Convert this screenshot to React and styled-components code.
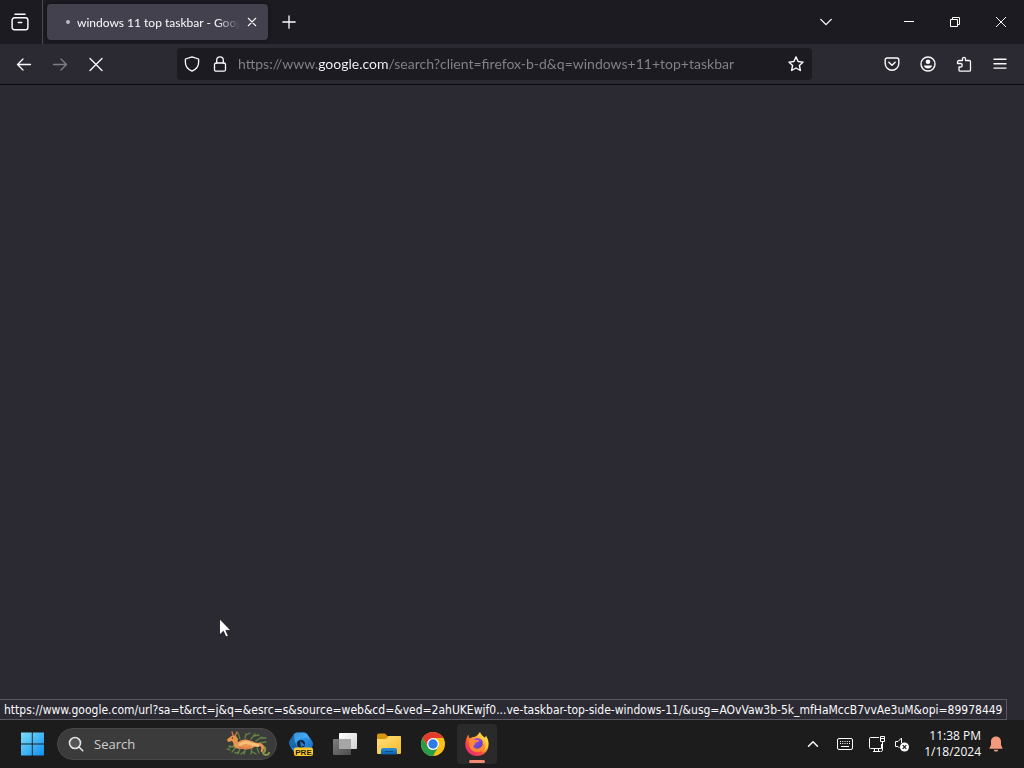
import React from 'react';
import styled, { createGlobalStyle } from 'styled-components';

const GlobalStyle = createGlobalStyle`
  * { box-sizing: border-box; }
  body {
    margin: 0;
    background: #2b2a33;
    font-family: "Open Sans", "Noto Sans", sans-serif;
    color: #fbfbfe;
  }
  button, input { font: inherit; color: inherit; border: 0; padding: 0; margin: 0; background: none; outline: none; }
  svg { display: block; flex: none; }
`;

const Desktop = styled.div`
  display: flex;
  flex-direction: column;
  min-height: 100vh;
`;

const Browser = styled.main`
  flex: 1;
  display: flex;
  flex-direction: column;
  font-family: Lato, "Open Sans", sans-serif;
`;

const TitleBar = styled.header`
  display: flex;
  align-items: center;
  height: 44px;
  background: #1c1b22;
`;

const IconButton = styled.button`
  display: flex;
  align-items: center;
  justify-content: center;
  flex: none;
  width: ${(p) => p.$width || 36}px;
  height: ${(p) => p.$height || 32}px;
  opacity: ${(p) => (p.disabled ? 0.4 : 1)};
`;

const ViewButtonArea = styled.div`
  display: flex;
  align-items: center;
  height: 44px;
  padding-right: 2px;
  border-right: 1px solid #4a4952;
`;

const Tab = styled.div`
  display: flex;
  align-items: center;
  width: 221px;
  height: 36px;
  margin-left: 4px;
  padding: 0 4px 0 19px;
  border-radius: 4px;
  background: #42414d;
  box-shadow: 0 0 4px rgba(0, 0, 0, 0.4);
`;

const Throbber = styled.span`
  width: 4px;
  height: 4px;
  margin-right: 7px;
  border-radius: 50%;
  background: #b9b8c2;
`;

const TabTitle = styled.span`
  flex: 1;
  min-width: 0;
  overflow: hidden;
  white-space: nowrap;
  padding-top: 2px;
  font-size: 12px;
  line-height: 18px;
  mask-image: linear-gradient(to left, transparent, #000 24px);
`;

const WindowControls = styled.div`
  display: flex;
  margin-left: auto;
  padding-left: 8px;
`;

const TabListButton = styled(IconButton)`
  margin-right: 37px;
`;

const Toolbar = styled.nav`
  display: flex;
  align-items: center;
  height: 41px;
  padding: 0 6px;
  background: #2b2a33;
  border-bottom: 1px solid #0c0c0d;
`;

const AddressBar = styled.div`
  flex: 1;
  display: flex;
  align-items: center;
  min-width: 0;
  height: 32px;
  margin: 0 62px 0 63px;
  padding-left: 1px;
  border-radius: 4px;
  background: #1c1b22;
`;

const AddressInput = styled.input`
  flex: 1;
  min-width: 0;
  height: 24px;
  margin-left: 4px;
  font-size: 14px;
  line-height: 24px;
  color: transparent;
  background: linear-gradient(90deg, #85848c 80px, #fbfbfe 80px, #fbfbfe 151px, #85848c 151px);
  background-clip: text;
`;

const Page = styled.section`
  position: relative;
  flex: 1;
  background: #2b2a33;
`;

const StatusPanel = styled.div`
  position: absolute;
  left: 0;
  bottom: 0;
  height: 21px;
  padding: 0 4px;
  border: 1px solid #5b5a63;
  border-left: 0;
  background: #2b2a33;
  font-family: "DejaVu Sans Condensed", "Open Sans", sans-serif;
  font-size: 12px;
  line-height: 21px;
  white-space: nowrap;
`;

const Pointer = styled.svg`
  position: absolute;
  left: 219px;
  top: 533px;
`;

const Taskbar = styled.footer`
  display: flex;
  align-items: center;
  height: 48px;
  padding: 0 20px 0 12px;
  background: #1c1c1c;
`;

const SearchBox = styled.label`
  display: flex;
  align-items: center;
  width: 220px;
  height: 32px;
  margin: 0 4px 0 5px;
  padding: 0 5px 0 10px;
  border: 1px solid #484848;
  border-radius: 16px;
  background: #3b3b3b;
`;

const SearchInput = styled.input`
  flex: 1;
  min-width: 0;
  margin-left: 10px;
  font-size: 13px;
  line-height: 20px;
  &::placeholder { color: #cfcfcf; opacity: 1; }
`;

const AppButton = styled.button`
  position: relative;
  display: flex;
  align-items: center;
  justify-content: center;
  flex: none;
  width: 40px;
  height: 40px;
  margin-right: 4px;
  border-radius: 4px;
  background: ${(p) => (p.$active ? '#2a2a2a' : 'transparent')};
  &::after {
    content: '';
    display: ${(p) => (p.$active ? 'block' : 'none')};
    position: absolute;
    bottom: 1px;
    left: 12px;
    width: 16px;
    height: 3px;
    border-radius: 2px;
    background: #f08a72;
  }
`;

const Tray = styled.div`
  display: flex;
  align-items: center;
  margin-left: auto;
`;

const Clock = styled.button`
  margin: 0 7px 0 13px;
  font-size: 12px;
  line-height: 16px;
  text-align: right;
  white-space: nowrap;
`;

const ClockLine = styled.span`
  display: block;
`;

function Line({ size = 16, width = 1.5, children, ...rest }) {
  return (
    <svg width={size} height={size} viewBox="0 0 16 16" fill="none" stroke="#fbfbfe" strokeWidth={width} strokeLinecap="round" strokeLinejoin="round" aria-hidden="true" {...rest}>
      {children}
    </svg>
  );
}

function SeaDragon() {
  return (
    <svg width="46" height="28" viewBox="0 0 46 28" fill="none" strokeLinecap="round" aria-hidden="true">
      <g stroke="#64853f" strokeWidth="1.300">
        <path d="M10 15 4 18M12 16 7 22M5 20l-3-1M16 16l-3 8M14 22l-4 1M21 17l-2 7M20 21l-4 3M27 17l-1 7M26 21l5 3M15 9l-2-6M20 8l1-4M21 5l4-2M26 9l4-5M29 6l5-1M31 11l6-4M35 8l6 0M34 13l7-1M9 17l-5-1M32 18l2 5" />
      </g>
      <path d="M38 17c3 0 3 4 0 6 2 3 5 2 6 0" stroke="#8c9a46" strokeWidth="2" />
      <path d="M2 9.500 5 7l3-2 3 1 2 3c0 2-1 2 0 3 3-2 6-3 10-2 5 1 7 3 12 3 4 1 5 4 3 8-1 2-3 1-2-1 1-3 0-4-3-4-5 1-7 3.500-12 3.500-5-1-8 0-11-2-2-2-1-5-3-6.500l-4 1Z" fill="#e8964f" />
      <path d="M15 14.500c4-2 6-3 10-1 2 1 5 1 8 2" stroke="#f5c17c" strokeWidth="3" />
      <path d="M14 17c4 1 7 2 11 1M8 5 7 2M10 6l2-4" stroke="#e0784a" strokeWidth="1.300" />
      <circle cx="7.500" cy="8" r=".8" fill="#45301b" />
    </svg>
  );
}

function WindowsLogo() {
  return (
    <svg width="24" height="24" viewBox="0 0 24 24" aria-hidden="true">
      <defs>
        <linearGradient id="win" x1="0" y1="0" x2="24" y2="24" gradientUnits="userSpaceOnUse">
          <stop offset="0" stopColor="#7fe3fb" /><stop offset="1" stopColor="#0f8df0" />
        </linearGradient>
      </defs>
      <path fill="url(#win)" d="M1 .5h10.800v11H1V.5zM12.700.5H24v11H12.700zM1 12.500h10.800v11H1zM12.700 12.500H24v11H12.700z" />
    </svg>
  );
}

function CopilotPre() {
  return (
    <svg width="26" height="26" viewBox="0 0 26 26" aria-hidden="true">
      <defs>
        <linearGradient id="cop" x1="2" y1="3" x2="22" y2="23" gradientUnits="userSpaceOnUse">
          <stop offset="0" stopColor="#0c5ca8" /><stop offset=".45" stopColor="#2c95e8" /><stop offset="1" stopColor="#1469c6" />
        </linearGradient>
      </defs>
      <path fill="url(#cop)" d="M9 1.500h7q2 0 3 1.500l5 7q2 3 0 6l-3 5q-1 2-3 2H9q-2 0-3-2l-4-6q-1-2-.5-4.500L6 3q1-1.500 3-1.500z" />
      <path fill="#54b5f5" d="M9 1.500h7q2 0 3 1.500l4 6c-5-3-9-3-12 0-3 2-5 5-8 6-2-2-2-4-1-6l4-6q1-1.500 3-1.500z" opacity=".6" />
      <path fill="#0b4688" d="M2 9 6 3c0 5 1 10 4 14H4l-2-3q-1-2 0-5z" opacity=".6" />
      <circle cx="13" cy="13" r="4" fill="#102640" />
      <path fill="#257ccc" d="m12 10 5 4-4 2z" />
      <rect x="6" y="16.500" width="19" height="8.500" rx="2" fill="#ffca2c" />
      <text x="15.500" y="23.500" textAnchor="middle" fontFamily="Liberation Sans, sans-serif" fontWeight="700" fontSize="8" fill="#1c1a14">PRE</text>
    </svg>
  );
}

function TaskView() {
  return (
    <svg width="26" height="24" viewBox="0 0 26 24" aria-hidden="true">
      <defs>
        <linearGradient id="tvA" x1="0" y1="0" x2="1" y2="1"><stop stopColor="#fff" /><stop offset="1" stopColor="#d1d1d1" /></linearGradient>
        <linearGradient id="tvB" x1="0" y1="0" x2="1" y2="1"><stop stopColor="#7d7d7d" /><stop offset="1" stopColor="#4d4d4d" /></linearGradient>
      </defs>
      <rect x="7" y="1" width="18" height="16" rx="1" fill="url(#tvA)" />
      <rect x="1" y="7" width="18" height="16" rx="1" fill="url(#tvB)" />
      <path d="M7 7h12v10H7z" fill="#a6a6a6" />
    </svg>
  );
}

function Explorer() {
  return (
    <svg width="26" height="24" viewBox="0 0 26 24" aria-hidden="true">
      <defs>
        <linearGradient id="fol" x1="0" y1="0" x2="1" y2="1"><stop stopColor="#ffe07a" /><stop offset="1" stopColor="#f7b92c" /></linearGradient>
        <linearGradient id="fob" x1="0" y1="0" x2="0" y2="1"><stop stopColor="#2b8fd8" /><stop offset="1" stopColor="#0c5fab" /></linearGradient>
      </defs>
      <path fill="#d9960c" d="M1 3.500Q1 1.500 3 1.500h6l3 3H25v5H1z" />
      <path fill="url(#fol)" d="M1 7h9l2.500-3H24q1 0 1 1v16q0 1-1 1H2q-1 0-1-1z" />
      <path fill="url(#fob)" d="M5 22.500V18q0-2 2-2h12q2 0 2 2v4.500z" />
      <path stroke="#0c4c88" strokeWidth="1" d="M9 19.500h8" />
    </svg>
  );
}

function Chrome() {
  return (
    <svg width="26" height="26" viewBox="0 0 26 26" aria-hidden="true">
      <circle cx="13" cy="13" r="12" fill="#fbc116" />
      <path fill="#e33b2e" d="M2.600 7A12 12 0 0 1 23.400 7H13a6 6 0 0 0-5.200 3z" />
      <path fill="#e33b2e" d="M2.600 7 7.800 16 13 7z" />
      <path fill="#259d4b" d="M2.600 7 7.800 16a6 6 0 0 0 5.200 3l5.200-3L13 25A12 12 0 0 1 2.600 7z" />
      <circle cx="13" cy="13" r="6" fill="#fff" />
      <circle cx="13" cy="13" r="4.700" fill="#2f7be8" />
    </svg>
  );
}

function Firefox() {
  return (
    <svg width="26" height="26" viewBox="0 0 26 26" aria-hidden="true">
      <defs>
        <linearGradient id="fxA" x1="21" y1="3" x2="5" y2="23" gradientUnits="userSpaceOnUse">
          <stop stopColor="#ffe94b" /><stop offset=".35" stopColor="#ffab2e" /><stop offset=".65" stopColor="#ff5037" /><stop offset="1" stopColor="#e5267d" />
        </linearGradient>
        <linearGradient id="fxB" x1="8" y1="8" x2="17" y2="18" gradientUnits="userSpaceOnUse">
          <stop stopColor="#a354ee" /><stop offset="1" stopColor="#5a3cc4" />
        </linearGradient>
      </defs>
      <path fill="url(#fxA)" d="M16 1c1 3 3 4 5 6l1-2c2 3 3 6 2.500 9.500C24 21 19 25 13 25S1.500 20.500 1.300 14C1.200 9 3 5.500 4.500 3.500c0 2 .5 3 1.500 4 1-1 2.500-1.500 4-1.500 2-.2 4-2 6-5z" />
      <circle cx="13.500" cy="12.500" r="5.500" fill="url(#fxB)" />
      <path fill="#ff8a35" d="M5 8c3-1 5 0 6 1h4c0 2-3 2.500-4 3 0 2-1 2-2 3 1 3 5 4 8 1 2-1 2-3 1-5 5 4 2 10-5 10-6 0-9-6-8-13z" />
      <path fill="#ffd43d" d="M16 1c1 5 6 6 6 12 0 4-2 7-5 9 6-2 9-8 6-15l-1-2-1 2c-2-2-4-3-5-6z" opacity=".8" />
    </svg>
  );
}

export default function App() {
  return (
    <Desktop>
      <GlobalStyle />
      <Browser>
        <TitleBar>
          <ViewButtonArea>
            <IconButton $width={40} aria-label="Firefox View">
              <Line size={18} width={1.3}>
                <path d="M3.500 1.200h9" />
                <path d="M1 6.300a2 2 0 0 1 2-2h10a2 2 0 0 1 2 2v6.500a2 2 0 0 1-2 2H3a2 2 0 0 1-2-2zM6.500 8.400h3" />
              </Line>
            </IconButton>
          </ViewButtonArea>
          <Tab role="tab" aria-selected="true">
            <Throbber />
            <TabTitle>windows 11 top taskbar - Google</TabTitle>
            <IconButton $width={24} $height={24} aria-label="Close tab">
              <Line size={10} width={1.7}><path d="m2 2 12 12M14 2 2 14" /></Line>
            </IconButton>
          </Tab>
          <IconButton $width={42} aria-label="New tab">
            <Line size={14} width={1.5}><path d="M8 1v14M1 8h14" /></Line>
          </IconButton>
          <WindowControls>
            <TabListButton $width={46} aria-label="List all tabs">
              <Line size={14} width={1.6}><path d="m2 5 6 6 6-6" /></Line>
            </TabListButton>
            <IconButton $width={46} aria-label="Minimize">
              <svg width="10" height="10" aria-hidden="true"><path d="M0 4.500h10" stroke="#fff" /></svg>
            </IconButton>
            <IconButton $width={46} aria-label="Restore">
              <svg width="10" height="10" fill="none" stroke="#fff" aria-hidden="true"><path d="M.5 2.500h7v7h-7zM2.500 2.500v-2h7v7h-2" /></svg>
            </IconButton>
            <IconButton $width={46} aria-label="Close window">
              <svg width="10" height="10" fill="none" stroke="#fff" aria-hidden="true"><path d="m0 0 10 10M10 0 0 10" /></svg>
            </IconButton>
          </WindowControls>
        </TitleBar>
        <Toolbar>
          <IconButton aria-label="Back"><Line width={1.3}><path d="M14.500 8.500h-13M7 3 1.500 8.500 7 14" /></Line></IconButton>
          <IconButton aria-label="Forward" disabled><Line width={1.3}><path d="M1.500 8.500h13M9 3l5.500 5.500L9 14" /></Line></IconButton>
          <IconButton aria-label="Stop"><Line width={1.3}><path d="m2 2.500 12 12M14 2.500l-12 12" /></Line></IconButton>
          <AddressBar>
            <IconButton $width={28} aria-label="Tracking protection">
              <Line width={1.3}><path d="M8 .8 14.600 3v3.500c0 4.300-2.700 7-6.600 8.700C4.100 13.500 1.400 10.800 1.400 6.500V3z" /></Line>
            </IconButton>
            <IconButton $width={28} aria-label="Site information">
              <Line width={1.3}><rect x="2.500" y="7" width="11" height="8.200" rx="1.500" /><path d="M4.700 7V4.200a3.300 3.300 0 0 1 6.600 0V7" /></Line>
            </IconButton>
            <AddressInput aria-label="Address" readOnly value="https://www.google.com/search?client=firefox-b-d&q=windows+11+top+taskbar" />
            <IconButton $width={32} aria-label="Bookmark this page">
              <Line width={1.4}><path d="m8 .9 2.100 4.600 5 .6-3.700 3.400 1 5L8 12l-4.400 2.500 1-5L.9 6.100l5-.6z" /></Line>
            </IconButton>
          </AddressBar>
          <IconButton aria-label="Save to Pocket">
            <Line width={1.4}><path d="M3 2h10a1.800 1.800 0 0 1 1.800 1.800V7.500a6.800 6.800 0 0 1-13.600 0V3.800A1.800 1.800 0 0 1 3 2zM4.800 6.200 8 9.300l3.200-3.100" /></Line>
          </IconButton>
          <IconButton aria-label="Account">
            <Line width={1.4}><circle cx="8" cy="8" r="7" /><circle cx="8" cy="5.800" r="2.300" fill="#fbfbfe" stroke="none" /><path d="M3.800 9.600h8.400c-.5 1.800-2.200 3-4.200 3s-3.700-1.200-4.200-3z" fill="#fbfbfe" stroke="none" /></Line>
          </IconButton>
          <IconButton aria-label="Extensions">
            <Line width={1.3}><path d="M1.500 7.500V6A1.500 1.500 0 0 1 3 4.500h3.500V2.800a1.500 1.500 0 0 1 3 0v1.700h3.800a1.200 1.200 0 0 1 1.200 1.200v8.300a1.200 1.200 0 0 1-1.200 1.200H4.200A1.200 1.200 0 0 1 3 14v-3h1.500a1.700 1.700 0 0 0 0-3.500z" /></Line>
          </IconButton>
          <IconButton aria-label="Application menu">
            <Line width={1.4}><path d="M2 3.300h12M2 7.700h12M2 12.100h12" /></Line>
          </IconButton>
        </Toolbar>
        <Page aria-label="Page content">
          <Pointer width="12" height="20" viewBox="0 0 12 20" aria-hidden="true">
            <path d="M.5.800v16.200l3.900-3.700 2.500 5.700 2.500-1.100-2.500-5.500h5z" fill="#fff" stroke="#111" strokeWidth=".8" />
          </Pointer>
          <StatusPanel role="status">https://www.google.com/url?sa=t&amp;rct=j&amp;q=&amp;esrc=s&amp;source=web&amp;cd=&amp;ved=2ahUKEwjf0...ve-taskbar-top-side-windows-11/&amp;usg=AOvVaw3b-5k_mfHaMccB7vvAe3uM&amp;opi=89978449</StatusPanel>
        </Page>
      </Browser>
      <Taskbar>
        <IconButton $width={40} $height={40} aria-label="Start"><WindowsLogo /></IconButton>
        <SearchBox>
          <Line width={1.6} stroke="#e4e4e4"><circle cx="7" cy="7" r="5.500" fill="#555" /><path d="m11.200 11.200 3.600 3.600" /></Line>
          <SearchInput placeholder="Search" aria-label="Search" />
          <SeaDragon />
        </SearchBox>
        <AppButton aria-label="Copilot preview"><CopilotPre /></AppButton>
        <AppButton aria-label="Task view"><TaskView /></AppButton>
        <AppButton aria-label="File Explorer"><Explorer /></AppButton>
        <AppButton aria-label="Chrome"><Chrome /></AppButton>
        <AppButton aria-label="Firefox" $active><Firefox /></AppButton>
        <Tray>
          <IconButton $width={32} aria-label="Show hidden icons"><Line size={12} width={2}><path d="m2 11 6-6 6 6" /></Line></IconButton>
          <IconButton $width={32} aria-label="Touch keyboard">
            <svg width="16" height="12" viewBox="0 0 16 12" fill="none" stroke="#fff" aria-hidden="true">
              <rect x=".5" y=".5" width="15" height="11" rx="1.500" />
              <path d="M3 3.500h10M3 5.500h10" strokeDasharray="1 1.250" /><path d="M4 8.500h8" />
            </svg>
          </IconButton>
          <IconButton $width={32} aria-label="Network">
            <svg width="18" height="18" viewBox="0 0 18 18" fill="none" stroke="#fff" aria-hidden="true">
              <path d="M11 2.500H2.500q-1 0-1 1v9q0 1 1 1h11V9M5 16.500h7M6.500 13.500v3M10.500 13.500v3" />
              <path d="M12.500 1.500h4v5h-4zM14.500 6.500v9q0 1-2 1M13 3.500h3" />
            </svg>
          </IconButton>
          <IconButton $width={18} aria-label="Volume muted">
            <svg width="16" height="16" viewBox="0 0 16 16" fill="none" stroke="#fff" aria-hidden="true">
              <path d="M7.500 7V2L4 5.500H1.500v5H4l1.500 1.500" />
              <circle cx="10.500" cy="11" r="4.500" fill="#fff" stroke="none" />
              <path d="m8.700 9.200 3.600 3.600M12.300 9.200l-3.600 3.600" stroke="#1c1c1c" strokeWidth="1.200" />
            </svg>
          </IconButton>
          <Clock aria-label="11:38 PM 1/18/2024"><ClockLine>11:38 PM</ClockLine><ClockLine>1/18/2024</ClockLine></Clock>
          <IconButton $width={16} aria-label="Notifications">
            <svg width="14" height="16" viewBox="0 0 14 16" fill="#f39a7c" aria-hidden="true">
              <path d="M7 .5c-3 0-5 2.300-5 5V9L.5 12v.7h13V12L12 9V5.500c0-2.700-2-5-5-5zM4.700 13.700h4.600C9 15 8.200 15.500 7 15.500s-2-.5-2.300-1.800z" />
            </svg>
          </IconButton>
        </Tray>
      </Taskbar>
    </Desktop>
  );
}
